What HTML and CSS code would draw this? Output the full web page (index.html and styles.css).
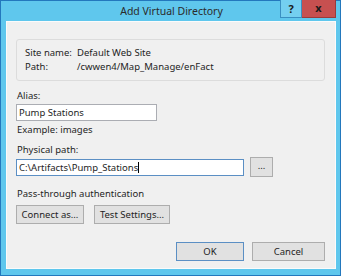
FILE: index.html
```html
<!DOCTYPE html>
<html lang="en">
<head>
    <meta charset="UTF-8">
    <title>Add Virtual Directory</title>
    <link rel="stylesheet" href="styles.css">
</head>
<body>

    <div class="window">
        <div class="titlebar">
            <span class="title">Add Virtual Directory</span>
            <div class="caption-buttons">
                <div class="help-btn">?</div>
                <div class="close-btn">x</div>
            </div>
        </div>

        <div class="client">
            <div class="site-box">
                <div class="info-row">
                    <span class="info-label">Site name:</span>
                    <span>Default Web Site</span>
                </div>
                <div class="info-row">
                    <span class="info-label">Path:</span>
                    <span>/cwwen4/Map_Manage/enFact</span>
                </div>
            </div>

            <div class="label alias-label">Alias:</div>
            <div class="textbox alias-box">Pump Stations</div>
            <div class="label hint">Example: images</div>

            <div class="label path-label">Physical path:</div>
            <div class="path-row">
                <div class="textbox path-box focused">C:\Artifacts\Pump_Stations<span class="caret"></span></div>
                <div class="button browse-btn">...</div>
            </div>

            <div class="label auth-label">Pass-through authentication</div>
            <div class="auth-row">
                <div class="button connect-btn">Connect as...</div>
                <div class="button test-btn">Test Settings...</div>
            </div>

            <div class="dialog-row">
                <div class="button ok-btn default">OK</div>
                <div class="button cancel-btn">Cancel</div>
            </div>
        </div>
    </div>

</body>
</html>
```

FILE: styles.css
```css
body {
    margin: 0;
    padding: 0;
    font-family: 'Noto Sans', 'Open Sans', sans-serif;
    font-size: 9.5px;
    color: #1e1e1e;
    background-color: #1f6fb2;
}

.window {
    width: 339px;
    height: 274px;
    border: 1px solid #2378bd;
    background-color: #5fc7ed;
    display: flex;
    flex-direction: column;
}

.titlebar {
    height: 20px;
    position: relative;
    display: flex;
    align-items: center;
    justify-content: center;
}

.title {
    font-size: 10.5px;
    color: #2b2b2b;
    margin-left: 2px;
}

.caption-buttons {
    position: absolute;
    top: -1px;
    right: 4px;
    display: flex;
}

.help-btn {
    width: 20px;
    height: 17px;
    border: 1px solid #3a8fc2;
    border-top: none;
    background-color: #74cff0;
    font-weight: bold;
    font-size: 11px;
    text-align: center;
    line-height: 17px;
    color: #1a1a1a;
}

.close-btn {
    width: 33px;
    height: 17px;
    border: 1px solid #9a3b3b;
    border-top: none;
    border-left: none;
    background-color: #c75050;
    font-weight: bold;
    font-size: 11px;
    text-align: center;
    line-height: 15px;
    color: #1a1a1a;
}

.client {
    flex: 1;
    margin: 0 4px 6px 5px;
    border: 1px solid #fbfbfb;
    background-color: #f0f0f0;
    padding: 17px 10px 0 9px;
    display: flex;
    flex-direction: column;
}

.site-box {
    height: 42px;
    border: 1px solid #dcdcdc;
    border-radius: 3px;
    padding: 6px 0 0 8px;
    box-sizing: border-box;
}

.info-row {
    display: flex;
    height: 14px;
    line-height: 14px;
}

.info-label {
    width: 52px;
}

.label {
    height: 14px;
    line-height: 14px;
    padding-left: 1px;
}

.alias-label {
    margin-top: 8px;
}

.hint {
    margin-top: 2px;
}

.path-label {
    margin-top: 6px;
}

.auth-label {
    margin-top: 10px;
}

.textbox {
    height: 15px;
    line-height: 15px;
    border: 1px solid #abadb3;
    background-color: #fff;
    padding-left: 2px;
    white-space: nowrap;
}

.textbox.focused {
    border-color: #5b8fc4;
}

.alias-box {
    width: 137px;
    margin-top: 1px;
}

.path-row {
    display: flex;
    align-items: center;
}

.path-box {
    width: 224px;
}

.caret {
    display: inline-block;
    width: 1px;
    height: 11px;
    background-color: #000;
    vertical-align: -2px;
}

.button {
    height: 17px;
    line-height: 17px;
    border: 1px solid #adadad;
    background-color: #e1e1e1;
    text-align: center;
}

.button.default {
    border-color: #5b8fc4;
}

.browse-btn {
    width: 21px;
    margin-left: 6px;
    height: 18px;
    line-height: 16px;
}

.auth-row {
    display: flex;
    gap: 10px;
    margin-top: 4px;
}

.connect-btn {
    width: 66px;
}

.test-btn {
    width: 74px;
}

.dialog-row {
    display: flex;
    justify-content: flex-end;
    gap: 8px;
    margin-top: 18px;
}

.ok-btn {
    width: 66px;
}

.cancel-btn {
    width: 71px;
}
```
